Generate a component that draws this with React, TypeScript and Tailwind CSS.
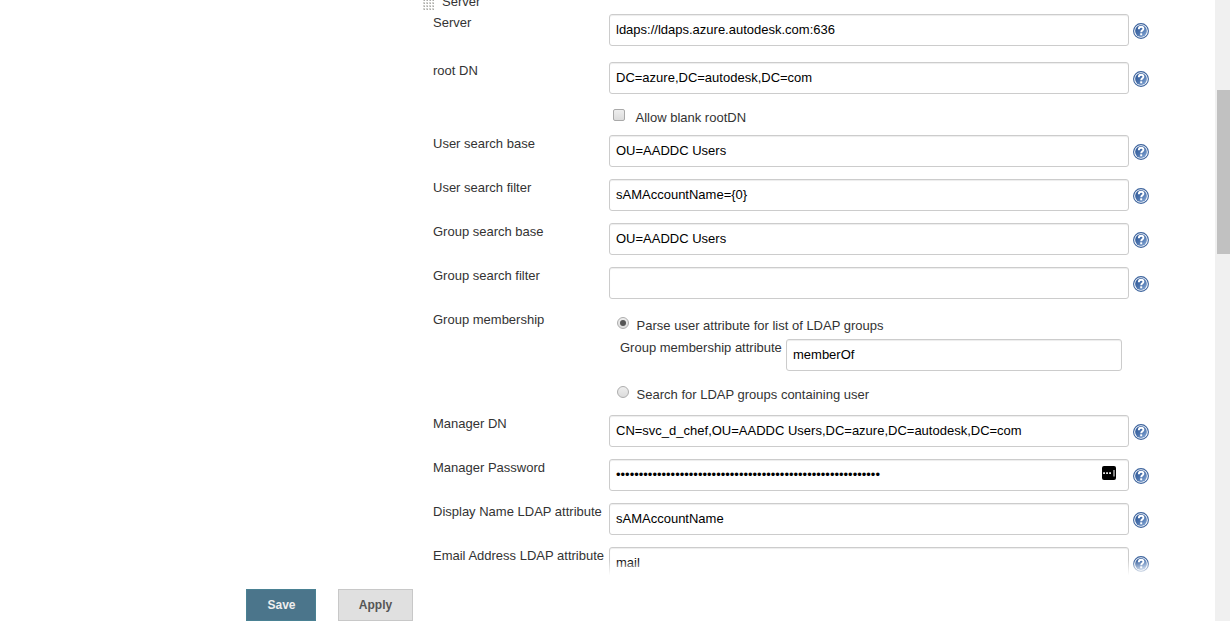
import type { ReactNode } from 'react';

function HelpIcon() {
  return (
    <svg width="16" height="16" viewBox="0 0 16 16" className="mt-[9px] ml-1 shrink-0" aria-hidden="true">
      <defs>
        <linearGradient id="help" x1="0" y1="0" x2="1" y2="1">
          <stop offset="0" stopColor="#2a5596" />
          <stop offset="0.5" stopColor="#4a72ac" />
          <stop offset="1" stopColor="#8fb0dc" />
        </linearGradient>
      </defs>
      <circle cx="8" cy="8" r="7.4" fill="#fff" stroke="#3c639d" strokeWidth="1.1" />
      <circle cx="8" cy="8" r="5.9" fill="url(#help)" />
      <path d="M5.8 6.2C5.8 4.5 6.7 3.7 8.1 3.7C9.6 3.7 10.4 4.6 10.4 5.7C10.4 7.3 8.2 7.4 8.2 9.3" fill="none" stroke="#fff" strokeWidth="1.9" />
      <rect x="7.2" y="10.3" width="2" height="2" fill="#fff" />
    </svg>
  );
}

function Field({ value, className = 'w-[520px]', children }: { value: string; className?: string; children?: ReactNode }) {
  return (
    <div className={`flex h-8 shrink-0 items-start justify-between rounded-[3px] border border-[#ccc] bg-white px-1.5 text-black shadow-[inset_0_1px_1px_rgba(0,0,0,0.075)] ${className}`}>
      <span className="leading-[29px] whitespace-pre">{value}</span>
      {children}
    </div>
  );
}

function Row({ label, value, className = 'h-11', children }: { label: string; value: string; className?: string; children?: ReactNode }) {
  return (
    <div className={`flex shrink-0 items-start ${className}`}>
      <div className="w-44 shrink-0 leading-[17px] whitespace-nowrap">{label}</div>
      <Field value={value}>{children}</Field>
      <HelpIcon />
    </div>
  );
}

function Radio({ checked = false }: { checked?: boolean }) {
  return (
    <span className="flex size-3 shrink-0 items-center justify-center rounded-full border border-[#adadad] bg-linear-to-b from-[#eee] to-[#dcdcdc]">
      {checked && <span className="size-1.5 rounded-full bg-[#555]" />}
    </span>
  );
}

function GripIcon() {
  return (
    <svg width="12" height="12" viewBox="0 0 12 12" className="-mt-px shrink-0" aria-hidden="true">
      <defs>
        <pattern id="grip" width="3" height="3" patternUnits="userSpaceOnUse">
          <rect width="2" height="2" fill="#d4d4d0" />
          <rect x="1" y="1" width="1" height="1" fill="#aaa" />
        </pattern>
      </defs>
      <rect width="12" height="12" fill="url(#grip)" />
    </svg>
  );
}

function ManagerBadge() {
  return (
    <svg width="14" height="14" viewBox="0 0 14 14" className="mt-[6px] mr-[6px] shrink-0" aria-hidden="true">
      <rect width="14" height="14" rx="2" fill="#000" />
      <path d="M1.2 6.2h1.7v1.7H1.2zM4.2 6.2h1.7v1.7H4.2zM7.2 6.2h1.7v1.7H7.2zM11.5 4h1v6.5h-1z" fill="#fff" />
    </svg>
  );
}

export default function App() {
  return (
    <div className="flex h-[621px] w-[1230px] overflow-hidden bg-white font-['Liberation_Sans',Arial,sans-serif] text-[13px] text-[#333]">
      <main className="relative flex flex-1 flex-col">
        <div className="flex h-[577px] shrink-0 flex-col overflow-hidden pl-[433px]">
          <div className="-ml-2.5 flex h-3.5 shrink-0">
            <GripIcon />
            <span className="-mt-[7px] ml-[7px] leading-[17px]">Server</span>
          </div>
          <Row label="Server" value="ldaps://ldaps.azure.autodesk.com:636" className="h-12" />
          <Row label="root DN" value="DC=azure,DC=autodesk,DC=com" className="h-[47px]" />
          <div className="flex h-[26px] shrink-0 items-start pl-[180px]">
            <span className="size-3 rounded-[2px] border border-[#a9a9a9] bg-linear-to-b from-[#eee] to-[#dcdcdc]" />
            <span className="ml-[10.5px] leading-[17px]">Allow blank rootDN</span>
          </div>
          <Row label="User search base" value="OU=AADDC Users" />
          <Row label="User search filter" value="sAMAccountName={0}" />
          <Row label="Group search base" value="OU=AADDC Users" />
          <Row label="Group search filter" value="" />
          <div className="flex h-[104px] shrink-0">
            <div className="w-44 leading-[17px]">Group membership</div>
            <div className="flex flex-col pt-[6px] pl-2">
              <div className="flex h-[22px] items-start">
                <Radio checked />
                <span className="ml-[7.6px] leading-[17px]">Parse user attribute for list of LDAP groups</span>
              </div>
              <div className="flex h-[47px] items-start pl-[3px]">
                <span className="w-[166px] leading-[17px]">Group membership attribute</span>
                <Field value="memberOf" className="w-[336px]" />
              </div>
              <div className="flex items-start">
                <Radio />
                <span className="ml-[7.6px] leading-[17px]">Search for LDAP groups containing user</span>
              </div>
            </div>
          </div>
          <Row label="Manager DN" value="CN=svc_d_chef,OU=AADDC Users,DC=azure,DC=autodesk,DC=com" />
          <Row label="Manager Password" value="••••••••••••••••••••••••••••••••••••••••••••••••••••••••••">
            <ManagerBadge />
          </Row>
          <Row label="Display Name LDAP attribute" value="sAMAccountName" />
          <Row label="Email Address LDAP attribute" value="mail" />
        </div>
        <div className="absolute top-[560px] left-0 h-[17px] w-full bg-linear-to-b from-white/0 to-white to-90%" />
        <div className="flex h-11 shrink-0 items-start gap-[22px] pt-3 pl-[246px] text-[12px] font-bold">
          <button className="h-8 w-[70px] border border-[#4a8193] bg-[#4b758b] pl-px text-[#eee]">Save</button>
          <button className="h-8 w-[75px] border border-[#c8c8c8] bg-[#e0e0e0] text-[#555]">Apply</button>
        </div>
      </main>
      <div className="w-[15px] bg-[#f0f0f0] pt-[90px] pl-0.5">
        <div className="h-[164px] bg-[#c1c1c1]" />
      </div>
    </div>
  );
}
